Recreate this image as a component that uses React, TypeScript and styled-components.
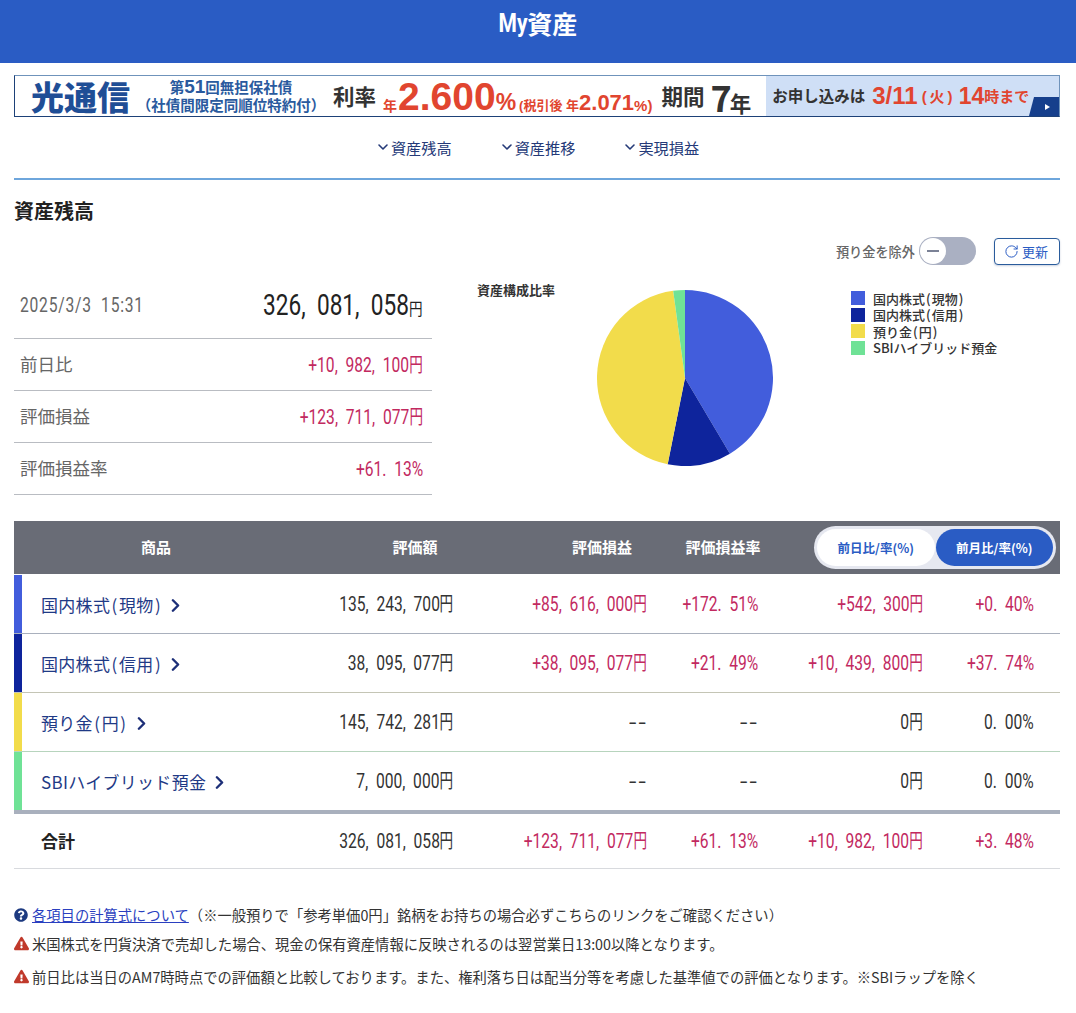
import React from "react";
import styled, { createGlobalStyle } from "styled-components";
import { ChevronDown, ChevronRight, RotateCw } from "lucide-react";
import { FaExclamationTriangle, FaQuestionCircle } from "react-icons/fa";

const CJK = '"Noto Sans CJK JP", "Noto Sans", sans-serif';
const NUM = 'Roboto, "Noto Sans CJK JP", sans-serif';

const Global = createGlobalStyle`
  html, body { margin: 0; padding: 0; background: #fff; }
  body { font-family: ${CJK}; color: #333; overflow: hidden; }
  * { box-sizing: border-box; }
`;

const Page = styled.div`width: 1076px; height: 1013px; overflow: hidden;`;
const Header = styled.header`
  height: 63px; background: #2a5cc4; color: #fff; display: flex; justify-content: center; align-items: flex-start;
  font: 700 25px/47px ${CJK};
`;
const HeaderLatin = styled.span`display: inline-block; margin-left: -6px; font-family: ${NUM}; transform: scaleX(.84); transform-origin: right center;`;
const Main = styled.main`padding: 12px 16px 0 14px;`;

const Banner = styled.a`
  display: flex; align-items: center; height: 42px; white-space: nowrap;
  border: 1px solid #6f93bb; border-bottom-color: #1d4178; border-left-color:#1d4178;
  font-family: ${CJK}; font-weight: 700; line-height: 1; color: #333;
`;
const BannerName = styled.span`margin-left: 16px; font-size: 33px; line-height: 38px; color: #1f4e96; font-weight: 900;`;
const BannerBond = styled.span`
  display: flex; flex-direction: column; align-items: center; margin-left: 6px; width: 190px;
  color: #2a5a9e; font-size: 14.5px; line-height: 18px; font-weight: 700;
  b { font: 700 19px/16px "Liberation Sans", sans-serif; }
`;
const BannerLabel = styled.span<{ $size?: number; $gap?: number; $low?: boolean }>`
  font-size: ${(p) => p.$size ?? 21.5}px; line-height: 1; margin-left: ${(p) => p.$gap ?? 0}px; color: #333; font-weight: 700;
  ${(p) => (p.$low ? "align-self: flex-end; margin-bottom: 3px;" : "")}
`;
const BannerRed = styled.span<{ $size: number; $gap?: number; $low?: number; $track?: number }>`
  font: 700 ${(p) => p.$size}px/1 "Liberation Sans", ${CJK}; color: #e1452f; margin-left: ${(p) => p.$gap ?? 0}px;
  letter-spacing: ${(p) => p.$track ?? 0}px;
  ${(p) => (p.$low !== undefined ? `align-self: flex-end; margin-bottom: ${p.$low}px;` : "")}
`;
const BannerApply = styled.span`
  position: relative; display: flex; align-items: center; margin-left: 15px; height: 100%; flex: 1;
  background: #cfdff6; padding-left: 6px; font-size: 15.5px; color: #333;
`;
const Corner = styled.svg`position: absolute; right: 0; bottom: 0;`;

const Nav = styled.nav`display: flex; justify-content: center; gap: 47px; height: 63px; align-items: center; border-bottom: 2px solid #6ea6dc; padding-bottom: 2px;`;
const NavItem = styled.a`display: flex; align-items: center; gap: 0; font-size: 15.2px; color: #253a78;`;

const Title = styled.h2`margin: 19px 0 0; font-size: 20px; line-height: 24px; font-weight: 700; color: #222;`;

const Tools = styled.div`display: flex; justify-content: flex-end; align-items: center; height: 28px; margin-top: 14px;`;
const ToggleLabel = styled.span`font-size: 13.2px; font-weight: 500; color: #666; margin-right: 4px;`;
const Switch = styled.span`
  display: flex; align-items: center; width: 57px; height: 28px; border-radius: 14px; background: #aab0c2; padding: 1px;
`;
const Knob = styled.span`
  width: 26px; height: 26px; border-radius: 50%; background: #fff; display: flex; align-items: center; justify-content: center;
  &::before { content: ""; width: 12px; height: 2px; background: #7b8296; }
`;
const Refresh = styled.button`
  margin-left: 18px; width: 66px; height: 27px; border: 1px solid #2a5c9c; border-radius: 4px; background: #fff;
  display: flex; align-items: center; justify-content: center; gap: 3px; color: #2a5cc4; font: 400 13px ${CJK}; padding: 0 2px 0 0;
  box-shadow: 0 1px 2px rgba(40,70,130,.25);
`;

const Overview = styled.section`display: flex; height: 250px; margin-top: 6px;`;
const Summary = styled.div`width: 418px; flex: none; display: flex; flex-direction: column;`;
const SummaryRow = styled.div<{ $top?: boolean }>`
  display: flex; justify-content: space-between; align-items: center; padding: 0 9px 0 6px;
  height: ${(p) => (p.$top ? "68px" : "52px")}; border-bottom: 1px solid #b9bcc2; flex: none;
`;
const RowLabel = styled.span`font-size: 17.5px; color: #666; font-weight: 400; line-height: 24px; margin-top: -2px;`;

const Num = styled.span<{ $size?: number; $c?: string; $left?: boolean; $track?: number }>`
  display: inline-block; white-space: nowrap;
  font: 400 ${(p) => p.$size ?? 20}px/26px ${NUM}; color: ${(p) => p.$c ?? "#333"};
  letter-spacing: ${(p) => p.$track ?? 0}px;
  transform: scaleX(.78); transform-origin: ${(p) => (p.$left ? "left" : "right")} center;
`;
const Sep = styled.span`padding-right: .5em;`;
const Yen = styled.span`
  display: inline-block; margin-left: -.13em; font-family: ${CJK}; font-size: 1em; line-height: 0;
  transform: scaleX(.87); transform-origin: right center;
`;
const SmallYen = styled.span`font-family: ${CJK}; font-size: .6em; line-height: 0;`;
const Dash = styled.span`
  display: inline-block; letter-spacing: 1.5px; margin-right: -1.5px;
  transform: scaleX(1.7); transform-origin: right center;
`;
const DateGap = styled.span`padding-left: .6em;`;

const ChartLabel = styled.div`margin: 10px 0 0 45px; font-size: 13px; font-weight: 700; color: #333; white-space: nowrap; width: 79px; line-height: 18px;`;
const Pie = styled.svg`margin: 19px 0 0 41px; flex: none; width: 176px; height: 176px;`;
const Legend = styled.ul`list-style: none; margin: 19px 0 0 78px; padding: 0; white-space: nowrap;`;
const LegendItem = styled.li`display: flex; align-items: center; gap: 8px; height: 16.5px; font-size: 13px; font-weight: 500; color: #333;`;
const Swatch = styled.i<{ $c: string }>`width: 14px; height: 14px; background: ${(p) => p.$c};`;
const Paren = styled.span`padding: 0 .08em;`;

const Table = styled.section``;
const Head = styled.div`
  display: grid; grid-template-columns: 284px 234px 140px 102px 1fr; align-items: center; height: 53px;
  background: #696c76; color: #fff; font-size: 15px; line-height: 20px; font-weight: 700; text-align: center;
  > span { margin-bottom: 2px; }
`;
const Pills = styled.div`
  justify-self: end; margin-right: 4px; display: flex; align-items: center; gap: 1px; width: 242px; height: 43px; border-radius: 22px;
  background: #e6e8f0; padding: 0 3px;
`;
const Pill = styled.span<{ $on?: boolean }>`
  flex: 1; height: 37px; border-radius: 19px; display: flex; align-items: center; justify-content: center;
  font-size: 12.5px; font-weight: 700; background: ${(p) => (p.$on ? "#2a5cc4" : "#fff")}; color: ${(p) => (p.$on ? "#fff" : "#2a5cc4")};
`;
const Row = styled.div<{ $c?: string; $line?: string }>`
  display: grid; grid-template-columns: 284px 155px 194px 111px 165px 111px; height: ${(p) => (p.$c ? "59px" : "54px")};
  padding-bottom: ${(p) => (p.$c ? "0" : "2px")};
  align-items: center; justify-items: end; border-top: 1px solid ${(p) => p.$line ?? "transparent"};
  box-shadow: ${(p) => (p.$c ? `inset 8px 0 0 ${p.$c}` : "none")};
`;
const Name = styled.a`justify-self: start; display: flex; align-items: center; gap: 3px; padding-left: 27px; font-size: 17px; letter-spacing: .3px; color: #1f3a86;`;
const NameArrow = styled(ChevronRight)`margin-top: 3px; color: #1d2f78;`;
const TotalName = styled.b`justify-self: start; padding-left: 27px; font-size: 17px; line-height: 24px; color: #222;`;
const TotalBar = styled.div`height: 4px; background: #a9b0bd;`;
const TotalRow = styled.div`border-bottom: 1px solid #d8dade;`;

const Notes = styled.div`margin-top: 31px; font-size: 14.3px; color: #333;`;
const Note = styled.p<{ $h: number }>`margin: 0; display: flex; align-items: center; gap: 3px; height: ${(p) => p.$h}px; white-space: nowrap;`;
const HelpNote = styled(Note)`gap: 4px;`;
const HelpLink = styled.a`color: #2a3fc0; text-decoration: underline;`;

const Amount = ({ v }: { v: string }) => (
  <>
    {v.split(/([,.円])/).map((s, i) =>
      s === "," || s === "." ? <Sep key={i}>{s}</Sep> : s === "円" ? <Yen key={i}>{s}</Yen> : s
    )}
  </>
);

const Label = ({ t }: { t: string }) => (
  <span>
    {t.split(/([()])/).map((s, i) => (s === "(" || s === ")" ? <Paren key={i}>{s}</Paren> : s))}
  </span>
);

const series = [
  { name: "国内株式(現物)", c: "#425ddc", v: 135243700 },
  { name: "国内株式(信用)", c: "#0e249c", v: 38095077 },
  { name: "預り金(円)", c: "#f2dc4b", v: 145742281 },
  { name: "SBIハイブリッド預金", c: "#6fe296", v: 7000000 },
];

const slices = (() => {
  const total = series.reduce((a, s) => a + s.v, 0);
  let a = 0;
  return series.map((s) => {
    const f = s.v / total;
    const p = (t: number) => `${88 + 88 * Math.sin(t * 2 * Math.PI)} ${88 - 88 * Math.cos(t * 2 * Math.PI)}`;
    const d = `M88 88L${p(a)}A88 88 0 ${f > 0.5 ? 1 : 0} 1 ${p(a + f)}Z`;
    a += f;
    return { d, c: s.c };
  });
})();

const rows = [
  { c: "#425ddc", line: "transparent", name: "国内株式(現物)", a: "135,243,700円", b: "+85,616,000円", r: "+172.51%", d: "+542,300円", e: "+0.40%" },
  { c: "#0e249c", line: "#a9b0bd", name: "国内株式(信用)", a: "38,095,077円", b: "+38,095,077円", r: "+21.49%", d: "+10,439,800円", e: "+37.74%" },
  { c: "#f2dc4b", line: "#c4c5b5", name: "預り金(円)", a: "145,742,281円", b: "--", r: "--", d: "0円", e: "0.00%" },
  { c: "#6fe296", line: "#b7d4bd", name: "SBIハイブリッド預金", a: "7,000,000円", b: "--", r: "--", d: "0円", e: "0.00%" },
];

const RED = "#c2295f";
const Val = ({ v }: { v: string }) => (
  <Num $c={v.startsWith("+") ? RED : "#333"}>{v === "--" ? <Dash>{v}</Dash> : <Amount v={v} />}</Num>
);

export default function App() {
  return (
    <Page>
      <Global />
      <Header><HeaderLatin>My</HeaderLatin>資産</Header>
      <Main>
        <Banner>
          <BannerName>光通信</BannerName>
          <BannerBond>
            <span>第<b>51</b>回無担保社債</span>
            <span>（社債間限定同順位特約付）</span>
          </BannerBond>
          <BannerLabel $gap={7}>利率</BannerLabel>
          <BannerRed $size={14} $gap={7} $low={3}>年</BannerRed>
          <BannerRed $size={39} $gap={1}>2.600</BannerRed>
          <BannerRed $size={23} $low={2}>%</BannerRed>
          <BannerRed $size={13} $gap={3} $low={4}>(税引後 年</BannerRed>
          <BannerRed $size={22} $low={2}>2.071</BannerRed>
          <BannerRed $size={15} $low={3}>%)</BannerRed>
          <BannerLabel $gap={9}>期間</BannerLabel>
          <BannerLabel $size={36} $gap={6}>7</BannerLabel>
          <BannerLabel $low $gap={-2}>年</BannerLabel>
          <BannerApply>
            お申し込みは<BannerRed $size={24} $gap={7}>3/11</BannerRed>
            <BannerRed $size={15} $gap={4} $track={3}>(火)</BannerRed>
            <BannerRed $size={23} $gap={3}>14</BannerRed>
            <BannerRed $size={15}>時まで</BannerRed>
            <Corner width="30" height="19" viewBox="0 0 30 19">
              <path d="M5 0H30V19H0Z" fill="#163f8c" />
              <path d="M16 7l5 3-5 3Z" fill="#fff" />
            </Corner>
          </BannerApply>
        </Banner>

        <Nav>
          {["資産残高", "資産推移", "実現損益"].map((t) => (
            <NavItem key={t}><ChevronDown size={16} strokeWidth={2.4} />{t}</NavItem>
          ))}
        </Nav>

        <Title>資産残高</Title>
        <Tools>
          <ToggleLabel>預り金を除外</ToggleLabel>
          <Switch><Knob /></Switch>
          <Refresh><RotateCw size={15} strokeWidth={1.6} />更新</Refresh>
        </Tools>

        <Overview>
          <Summary>
            <SummaryRow $top>
              <Num $left $c="#666" $track={1}>2025/3/3<DateGap>15:31</DateGap></Num>
              <Num $size={29} $c="#222"><Amount v="326,081,058" /><SmallYen>円</SmallYen></Num>
            </SummaryRow>
            <SummaryRow><RowLabel>前日比</RowLabel><Val v="+10,982,100円" /></SummaryRow>
            <SummaryRow><RowLabel>評価損益</RowLabel><Val v="+123,711,077円" /></SummaryRow>
            <SummaryRow><RowLabel>評価損益率</RowLabel><Val v="+61.13%" /></SummaryRow>
          </Summary>
          <ChartLabel>資産構成比率</ChartLabel>
          <Pie viewBox="0 0 176 176">
            {slices.map((s) => <path key={s.c} d={s.d} fill={s.c} />)}
          </Pie>
          <Legend>
            {series.map((s) => (
              <LegendItem key={s.name}><Swatch $c={s.c} /><Label t={s.name} /></LegendItem>
            ))}
          </Legend>
        </Overview>

        <Table>
          <Head>
            <span>商品</span><span>評価額</span><span>評価損益</span><span>評価損益率</span>
            <Pills><Pill>前日比/率(%)</Pill><Pill $on>前月比/率(%)</Pill></Pills>
          </Head>
          {rows.map((r) => (
            <Row key={r.name} $c={r.c} $line={r.line}>
              <Name><Label t={r.name} /><NameArrow size={21} strokeWidth={2.8} /></Name>
              <Val v={r.a} /><Val v={r.b} /><Val v={r.r} /><Val v={r.d} /><Val v={r.e} />
            </Row>
          ))}
          <TotalBar />
          <TotalRow>
            <Row>
              <TotalName>合計</TotalName>
              <Val v="326,081,058円" /><Val v="+123,711,077円" /><Val v="+61.13%" /><Val v="+10,982,100円" /><Val v="+3.48%" />
            </Row>
          </TotalRow>
        </Table>

        <Notes>
          <HelpNote $h={29}><FaQuestionCircle size={14} color="#1d3a80" /><span><HelpLink>各項目の計算式について</HelpLink>（※一般預りで「参考単価0円」銘柄をお持ちの場合必ずこちらのリンクをご確認ください）</span></HelpNote>
          <Note $h={29}><FaExclamationTriangle size={15} color="#c0392b" />米国株式を円貨決済で売却した場合、現金の保有資産情報に反映されるのは翌営業日13:00以降となります。</Note>
          <Note $h={37}><FaExclamationTriangle size={15} color="#c0392b" />前日比は当日のAM7時時点での評価額と比較しております。また、権利落ち日は配当分等を考慮した基準値での評価となります。※SBIラップを除く</Note>
        </Notes>
      </Main>
    </Page>
  );
}
